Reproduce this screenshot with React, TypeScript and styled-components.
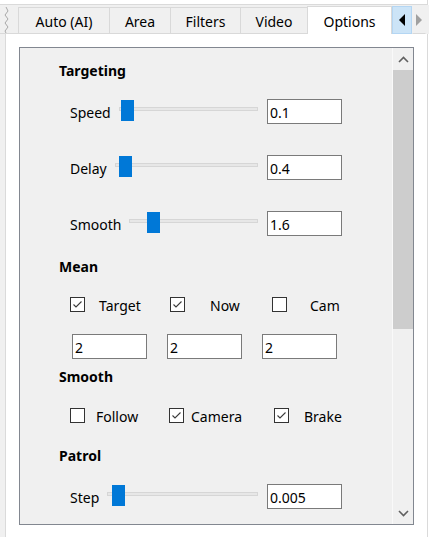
import React from 'react';
import styled, { createGlobalStyle } from 'styled-components';

const Global = createGlobalStyle`
  html, body { margin: 0; padding: 0; background: #fff; }
  body { font-family: "Noto Sans", "Segoe UI", sans-serif; font-size: 14px; color: #000; }
  * { box-sizing: border-box; }
`;

const Root = styled.div`
  width: 429px;
  height: 537px;
  display: flex;
  flex-direction: column;
  overflow: hidden;
  background: #fff;
`;

const TopStrip = styled.div`
  height: 5px;
  width: 428px;
  border-bottom: 1px solid #dadada;
  border-right: 1px solid #dadada;
`;

const Header = styled.div`
  height: 29px;
  display: flex;
  align-items: flex-end;
  background: #f0f0f0;
`;

const Zig = styled.div`
  width: 18px;
  height: 27px;
  border-bottom: 1px solid #d9d9d9;
  display: flex;
`;

const Tab = styled.div<{ $w: number; $sel?: boolean }>`
  width: ${p => p.$w}px;
  height: ${p => (p.$sel ? 28 : 27)}px;
  display: flex;
  align-items: center;
  justify-content: center;
  padding-top: 1px;
  border: 1px solid #d9d9d9;
  border-right: ${p => (p.$sel ? '1px solid #d9d9d9' : 'none')};
  border-bottom: ${p => (p.$sel ? 'none' : '1px solid #d9d9d9')};
  background: ${p => (p.$sel ? '#fff' : '#f0f0f0')};
  font-size: 14px;
  white-space: nowrap;
`;

const ArrowBtn = styled.div<{ $active?: boolean; $w: number }>`
  width: ${p => p.$w}px;
  height: 28px;
  display: flex;
  align-items: center;
  justify-content: center;
  background: ${p => (p.$active ? '#cce4f7' : 'transparent')};
  border: 1px solid ${p => (p.$active ? '#b4d6f3' : 'transparent')};
  border-bottom: 1px solid ${p => (p.$active ? '#b4d6f3' : '#d9d9d9')};
`;

const HeaderRest = styled.div`
  flex: 1;
  height: 28px;
`;

const Body = styled.div`
  flex: 1;
  display: flex;
  min-height: 0;
`;

const Gutter = styled.div`
  width: 6px;
  background: #f0f0f0;
  border-right: 1px solid #dadada;
`;

const Page = styled.div`
  width: 422px;
  background: #fff;
  border-right: 1px solid #dadada;
  padding: 13px 13px 12px 13px;
  display: flex;
`;

const Panel = styled.div`
  flex: 1;
  display: flex;
  border: 1px solid #828790;
  background: #f0f0f0;
  overflow: hidden;
`;

const Content = styled.div`
  flex: 1;
  padding: 13px 0 0 39px;
  display: flex;
  flex-direction: column;
  align-items: flex-start;
  overflow: hidden;
`;

const Heading = styled.div<{ $mt: number }>`
  margin-top: ${p => p.$mt}px;
  height: 20px;
  line-height: 20px;
  font-weight: 700;
  font-size: 14px;
`;

const SliderRow = styled.div<{ $mt: number }>`
  margin-top: ${p => p.$mt}px;
  margin-left: 11px;
  width: 272px;
  height: 25px;
  display: flex;
  align-items: center;
`;

const RowLabel = styled.span`
  line-height: 20px;
  padding-top: 2px;
  white-space: nowrap;
`;

const Slider = styled.div`
  flex: 1;
  height: 25px;
  margin: 0 9px 0 8px;
  position: relative;
`;

const SliderTrack = styled.div`
  position: absolute;
  left: 0;
  right: 0;
  top: 8px;
  height: 4px;
  background: #e7e7e7;
  border: 1px solid #d6d6d6;
`;

const SliderThumb = styled.div`
  position: absolute;
  top: 1px;
  width: 13px;
  height: 21px;
  background: #0078d7;
`;

const TextBox = styled.div`
  width: 75px;
  height: 25px;
  flex: none;
  background: #fff;
  border: 1px solid #7a7a7a;
  padding-left: 2px;
  padding-top: 1px;
  display: flex;
  align-items: center;
  font-size: 14px;
`;

const CheckRow = styled.div<{ $mt: number }>`
  margin-top: ${p => p.$mt}px;
  margin-left: 11px;
  height: 20px;
  display: flex;
  align-items: center;
`;

const CheckItem = styled.div<{ $w?: number }>`
  width: ${p => (p.$w ? `${p.$w}px` : 'auto')};
  display: flex;
  align-items: center;
`;

const Box = styled.div`
  width: 15px;
  height: 15px;
  flex: none;
  background: #fff;
  border: 1px solid #333;
  display: flex;
`;

const CheckLabel = styled.span<{ $gap: number }>`
  margin-left: ${p => p.$gap}px;
  line-height: 20px;
  padding-top: 3px;
  white-space: nowrap;
`;

const NumberRow = styled.div<{ $mt: number }>`
  margin-top: ${p => p.$mt}px;
  margin-left: 13px;
  display: flex;
  gap: 20px;
`;

const ScrollBar = styled.div`
  width: 21px;
  flex: none;
  border-left: 1px solid #f9f9f9;
  display: flex;
  flex-direction: column;
  background: #f0f0f0;
`;

const ScrollBtn = styled.div`
  height: 22px;
  display: flex;
  align-items: center;
  justify-content: center;
`;

const ScrollThumb = styled.div`
  height: 259px;
  background: #cdcdcd;
`;

const ScrollTrack = styled.div`
  flex: 1;
`;

const Check = ({ on }: { on: boolean }) => (
  <Box>
    {on && (
      <svg width="13" height="13" viewBox="0 0 13 13">
        <polyline points="2.5,6.5 5,9 10.5,3.5" fill="none" stroke="#3a3a3a" strokeWidth="1.1" />
      </svg>
    )}
  </Box>
);

const SliderField = ({ label, value, pos, mt }: { label: string; value: string; pos: number; mt: number }) => (
  <SliderRow $mt={mt}>
    <RowLabel>{label}</RowLabel>
    <Slider>
      <SliderTrack />
      <SliderThumb style={{ left: pos }} />
    </Slider>
    <TextBox>{value}</TextBox>
  </SliderRow>
);

const Chevron = ({ up }: { up?: boolean }) => (
  <svg width="11" height="7" viewBox="0 0 11 7">
    <polyline
      points={up ? '1,6 5.5,1.5 10,6' : '1,1 5.5,5.5 10,1'}
      fill="none"
      stroke="#606060"
      strokeWidth="1.6"
    />
  </svg>
);

export default function App() {
  return (
    <Root>
      <Global />
      <TopStrip />
      <Header>
        <Zig>
          <svg width="18" height="26" viewBox="0 0 18 26">
            <polyline
              points="6,0 8,4 5,8 8,12 5,16 8,20 5,24 6,26"
              fill="none"
              stroke="#a8a8a8"
              strokeWidth="1"
            />
          </svg>
        </Zig>
        <Tab $w={91}>Auto (AI)</Tab>
        <Tab $w={61}>Area</Tab>
        <Tab $w={70}>Filters</Tab>
        <Tab $w={67}>Video</Tab>
        <Tab $w={85} $sel>Options</Tab>
        <ArrowBtn $active $w={20}>
          <svg width="8" height="12" viewBox="0 0 8 12">
            <polygon points="7,0 7,12 1,6" fill="#000" />
          </svg>
        </ArrowBtn>
        <ArrowBtn $w={14}>
          <svg width="8" height="12" viewBox="0 0 8 12">
            <polygon points="1,0 1,12 7,6" fill="#a0a0a0" />
          </svg>
        </ArrowBtn>
        <HeaderRest />
      </Header>
      <Body>
        <Gutter />
        <Page>
          <Panel>
            <Content>
              <Heading $mt={0}>Targeting</Heading>
              <SliderField label="Speed" value="0.1" pos={2} mt={18} />
              <SliderField label="Delay" value="0.4" pos={4} mt={31} />
              <SliderField label="Smooth" value="1.6" pos={18} mt={31} />
              <Heading $mt={21}>Mean</Heading>
              <CheckRow $mt={17}>
                <CheckItem $w={100}>
                  <Check on />
                  <CheckLabel $gap={14}>Target</CheckLabel>
                </CheckItem>
                <CheckItem $w={102}>
                  <Check on />
                  <CheckLabel $gap={25}>Now</CheckLabel>
                </CheckItem>
                <CheckItem>
                  <Check on={false} />
                  <CheckLabel $gap={23}>Cam</CheckLabel>
                </CheckItem>
              </CheckRow>
              <NumberRow $mt={20}>
                <TextBox>2</TextBox>
                <TextBox>2</TextBox>
                <TextBox>2</TextBox>
              </NumberRow>
              <Heading $mt={8}>Smooth</Heading>
              <CheckRow $mt={18}>
                <CheckItem $w={99}>
                  <Check on={false} />
                  <CheckLabel $gap={11}>Follow</CheckLabel>
                </CheckItem>
                <CheckItem $w={105}>
                  <Check on />
                  <CheckLabel $gap={7}>Camera</CheckLabel>
                </CheckItem>
                <CheckItem>
                  <Check on />
                  <CheckLabel $gap={15}>Brake</CheckLabel>
                </CheckItem>
              </CheckRow>
              <Heading $mt={21}>Patrol</Heading>
              <SliderField label="Step" value="0.005" pos={5} mt={18} />
            </Content>
            <ScrollBar>
              <ScrollBtn>
                <Chevron up />
              </ScrollBtn>
              <ScrollThumb />
              <ScrollTrack />
              <ScrollBtn>
                <Chevron />
              </ScrollBtn>
            </ScrollBar>
          </Panel>
        </Page>
      </Body>
    </Root>
  );
}
